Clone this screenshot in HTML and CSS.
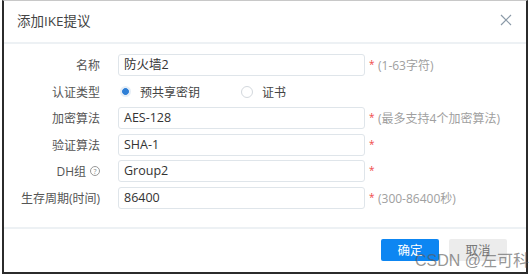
FILE: index.html
```html
<!DOCTYPE html>
<html lang="zh-CN">
<head>
  <meta charset="UTF-8" />
  <title>添加IKE提议</title>
  <link rel="stylesheet" href="styles.css">
</head>
<body>
  <div class="dialog">
    <div class="dialog-header">
      <span class="dialog-title">添加IKE提议</span>
      <svg class="close" width="12" height="12" viewBox="0 0 12 12">
        <path d="M1 1L11 11M11 1L1 11" stroke="#8b9aa8" stroke-width="1.2" fill="none"/>
      </svg>
    </div>

    <div class="form">
      <div class="row">
        <label class="label">名称</label>
        <div class="input">防火墙2</div>
        <span class="req">*</span>
        <span class="hint">(1-63字符)</span>
      </div>
      <div class="row">
        <label class="label">认证类型</label>
        <div class="radios">
          <span class="radio checked"></span>
          <span class="radio-text">预共享密钥</span>
          <span class="radio second"></span>
          <span class="radio-text">证书</span>
        </div>
      </div>
      <div class="row">
        <label class="label">加密算法</label>
        <div class="input">AES-128</div>
        <span class="req">*</span>
        <span class="hint">(最多支持4个加密算法)</span>
      </div>
      <div class="row">
        <label class="label">验证算法</label>
        <div class="input">SHA-1</div>
        <span class="req">*</span>
      </div>
      <div class="row">
        <label class="label">DH组 <span class="help">?</span></label>
        <div class="input">Group2</div>
        <span class="req">*</span>
      </div>
      <div class="row">
        <label class="label">生存周期(时间)</label>
        <div class="input">86400</div>
        <span class="req">*</span>
        <span class="hint">(300-86400秒)</span>
      </div>
    </div>

    <div class="dialog-footer">
      <button class="btn btn-ok">确定</button>
      <button class="btn btn-cancel">取消</button>
      <span class="watermark">CSDN @左可科</span>
    </div>
  </div>
</body>
</html>
```

FILE: styles.css
```css
body {
  margin: 0;
  background: #fff;
  font-family: "Open Sans", "Noto Sans CJK SC", sans-serif;
  color: #333;
}

.dialog {
  position: relative;
  margin-left: 2px;
  width: 522px;
  height: 271px;
  border: 2px solid #2b2b2b;
  border-top: 1px solid #c8c8c8;
  background: #fff;
}

.dialog-header {
  height: 41px;
  border-bottom: 2px solid #edf1f4;
  display: flex;
  align-items: center;
  justify-content: space-between;
  padding: 0 14px 0 13px;
}

.dialog-title {
  font-size: 13.5px;
  color: #444;
  margin-top: -3px;
}

.close {
  margin-top: -3px;
}

.form {
  display: flex;
  flex-direction: column;
  gap: 4.6px;
  padding: 10px 0 18px;
  border-bottom: 2px solid #edf1f4;
}

.row {
  display: flex;
  align-items: center;
  height: 22px;
}

.label {
  width: 96px;
  text-align: right;
  font-size: 12px;
  color: #555;
  margin-right: 18px;
  display: flex;
  justify-content: flex-end;
  align-items: center;
  gap: 4px;
}

.help {
  display: inline-flex;
  align-items: center;
  justify-content: center;
  width: 8px;
  height: 8px;
  border: 1px solid #999;
  border-radius: 50%;
  font-size: 7px;
  line-height: 1;
  color: #888;
}

.input {
  box-sizing: border-box;
  width: 247px;
  height: 22px;
  border: 1px solid #dfe5ea;
  border-radius: 3px;
  padding: 0 5px;
  font-size: 12.5px;
  line-height: 20px;
  color: #333;
}

.req {
  color: #f04848;
  font-size: 10px;
  margin-left: 4px;
  width: 9px;
  margin-top: -2px;
}

.hint {
  font-size: 12px;
  color: #a0a0a0;
}

.radios {
  display: flex;
  align-items: center;
  font-size: 12px;
  color: #444;
  margin-left: 2px;
}

.radio {
  box-sizing: border-box;
  width: 11px;
  height: 11px;
  border: 1px solid #d3d8dd;
  border-radius: 50%;
  margin-right: 9px;
}

.radio.checked {
  border: 2px solid #e6eef6;
  background: radial-gradient(circle, #2f7fd6 0 3.3px, #fff 3.8px);
}

.radio.second {
  width: 12px;
  height: 12px;
  margin-left: 41px;
}

.dialog-footer {
  display: flex;
  justify-content: flex-end;
  gap: 10px;
  padding: 10px 19px 0 0;
}

.btn {
  width: 58px;
  height: 22px;
  border: none;
  border-radius: 2px;
  font-family: "Noto Sans CJK SC", sans-serif;
  font-size: 12.5px;
  padding: 0;
}

.btn-ok {
  background: #0d86f2;
  color: #fff;
}

.btn-cancel {
  background: #ececec;
  color: #777;
}

.watermark {
  position: absolute;
  left: 411px;
  top: 246px;
  font-family: "Liberation Sans", "Noto Sans CJK SC", sans-serif;
  font-size: 16px;
  color: rgba(90, 90, 90, 0.65);
  white-space: nowrap;
}
```
